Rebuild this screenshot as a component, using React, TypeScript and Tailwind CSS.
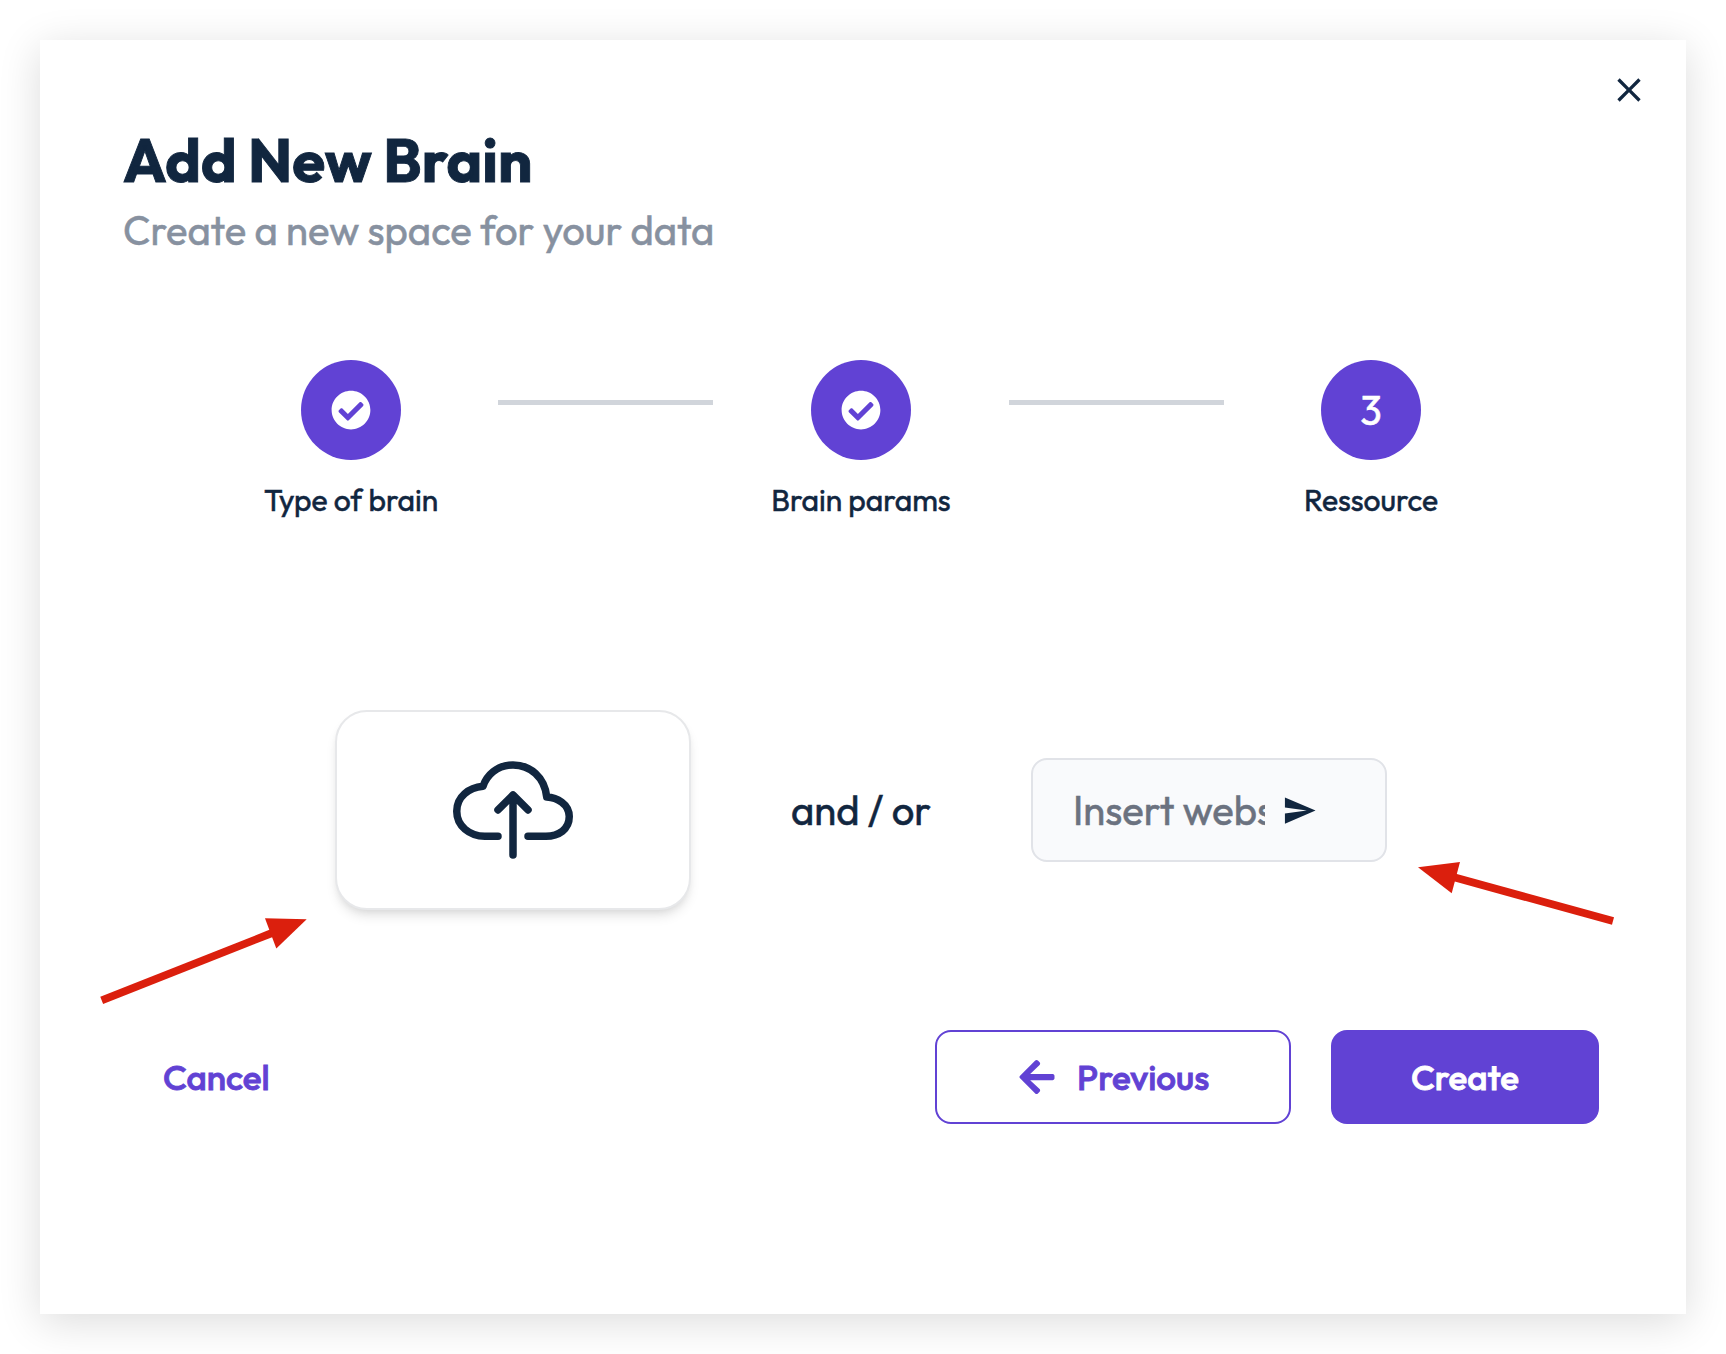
import type { ReactNode } from "react";
import { FaArrowLeft, FaCheckCircle } from "react-icons/fa";
import { IoCloudUploadOutline } from "react-icons/io5";
import { MdClose, MdSend } from "react-icons/md";

function Step({ label, children }: { label: string; children: ReactNode }) {
  return (
    <div className="flex w-[200px] flex-col items-center">
      <div className="flex size-[100px] items-center justify-center rounded-full bg-[#6142d4] text-white">
        {children}
      </div>
      <div className="mt-[22px] text-[30px] leading-9 tracking-[-0.02px] whitespace-nowrap">{label}</div>
    </div>
  );
}

function Connector() {
  return <div className="mt-10 h-[5px] w-[215px] bg-[#d1d5db]" />;
}

export default function App() {
  return (
    <div className="relative h-[1354px] w-[1726px] overflow-hidden bg-white p-10 font-['Outfit','Lato',sans-serif] text-[#11263f] [-webkit-text-stroke:0.5px]">
      <div className="flex h-[1274px] w-[1646px] flex-col bg-white pt-[30px] shadow-[0_8px_40px_rgba(0,0,0,0.14)]">
        <div className="flex h-10 justify-end pr-[37px]">
          <button aria-label="Close">
            <MdClose className="size-10" />
          </button>
        </div>

        <header className="mt-5 h-[230px] pl-[83px]">
          <h1 className="text-[60px] leading-[60px] font-bold whitespace-nowrap [-webkit-text-stroke:0.9px]">Add New Brain</h1>
          <p className="mt-4 text-[40px] leading-[48px] whitespace-nowrap text-[#8791a0]">
            Create a new space for your data
          </p>
        </header>

        <div className="ml-[211px] flex h-[350px] w-[1220px] items-start">
          <Step label="Type of brain">
            <FaCheckCircle className="size-10" />
          </Step>
          <div className="mr-12 ml-[47px]">
            <Connector />
          </div>
          <Step label="Brain params">
            <FaCheckCircle className="size-10" />
          </Step>
          <div className="mr-[47px] ml-12">
            <Connector />
          </div>
          <Step label="Ressource">
            <span className="text-[40px] leading-[48px]">3</span>
          </Step>
        </div>

        <div className="ml-[295px] flex h-[200px] w-[1052px] items-center justify-between">
          <button className="flex h-[200px] w-[356px] items-center justify-center rounded-[32px] border-2 border-[#e7e8ea] bg-white shadow-[0_8px_12px_-2px_rgba(0,0,0,0.1),0_4px_8px_-4px_rgba(0,0,0,0.1)]">
            <IoCloudUploadOutline className="size-[120px]" />
          </button>
          <span className="text-[40px] leading-[48px] whitespace-nowrap">and / or</span>
          <div className="flex h-[104px] w-[356px] items-center rounded-2xl border-2 border-[#e1e3e8] bg-[#f9fafc] pl-10">
            <input
              className="w-[192px] text-[40px] leading-[48px] outline-none placeholder:text-[#6b7280] placeholder:opacity-100"
              placeholder="Insert website URL"
            />
            <MdSend className="mt-px ml-[17px] size-[35px] shrink-0" />
          </div>
        </div>

        <footer className="mt-[120px] ml-[83px] flex h-[94px] w-[1476px] items-center text-[35px] leading-[44px] font-medium [-webkit-text-stroke:0.8px]">
          <button className="px-10 text-[#6142d4]">Cancel</button>
          <button className="ml-auto flex h-[94px] w-[356px] items-center rounded-2xl border-2 border-[#6142d4] pl-20 text-[#6142d4]">
            <FaArrowLeft className="size-10" />
            <span className="ml-5">Previous</span>
          </button>
          <button className="ml-10 h-[94px] w-[268px] rounded-2xl bg-[#6142d4] text-white">Create</button>
        </footer>
      </div>

      {/* Callout arrows laid over the dialog */}
      <svg className="pointer-events-none absolute inset-0" width="1726" height="1354" fill="#db1f0d" stroke="none">
        <path d="M101.7 1000.3L272 933" stroke="#db1f0d" strokeWidth="7.8" />
        <path d="M265 918.3L306.7 919.3L276.3 948.5Z" />
        <path d="M1613 921L1454 877.3" stroke="#db1f0d" strokeWidth="7.8" />
        <path d="M1418 867.3L1460 862L1451.7 893.2Z" />
      </svg>
    </div>
  );
}
